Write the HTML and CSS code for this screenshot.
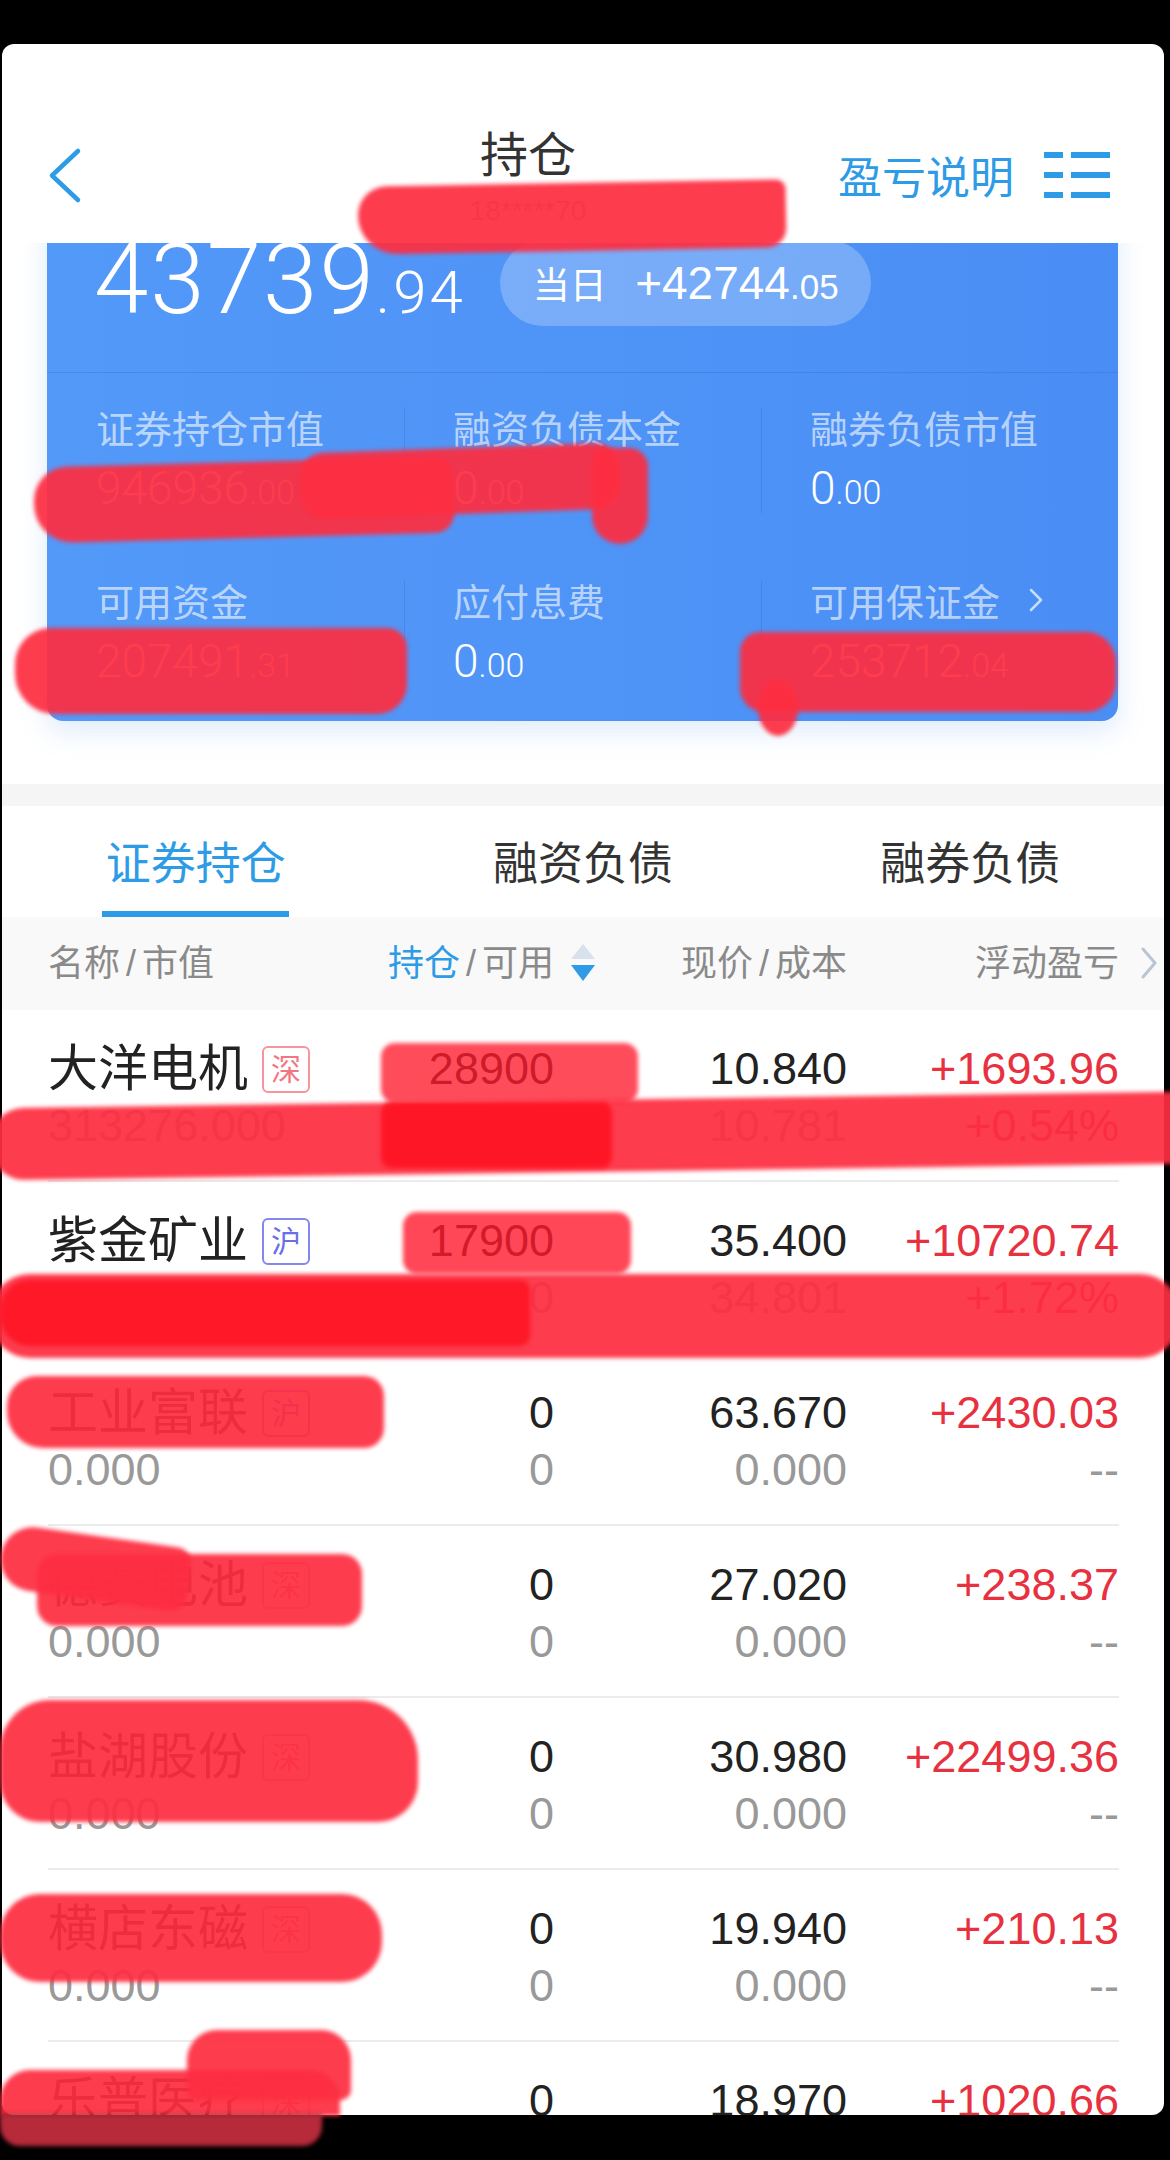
FILE: index.html
```html
<!DOCTYPE html>
<html lang="zh-CN">
<head>
    <meta charset="UTF-8">
    <meta name="viewport" content="width=device-width, initial-scale=1.0">
    <title>持仓</title>
    <link rel="stylesheet" href="styles.css">
</head>
<body>
    <div id="phone">
        <header id="nav">
            <div class="nav-left">
                <svg class="back" width="40" height="60" viewBox="0 0 40 60">
                    <polyline points="30,6 4,30.5 30,55" fill="none" stroke="#2e9be6" stroke-width="4.5" stroke-linecap="round" stroke-linejoin="round"/>
                </svg>
            </div>
            <div class="nav-title">
                <h1>持仓</h1>
                <p>18*****70</p>
            </div>
            <div class="nav-right">
                <span>盈亏说明</span>
                <svg class="menu" width="66" height="46" viewBox="0 0 66 46">
                    <rect x="0" y="0" width="19" height="6" fill="#2e9be6"/>
                    <rect x="27" y="0" width="39" height="6" fill="#2e9be6"/>
                    <rect x="0" y="20" width="19" height="6" fill="#2e9be6"/>
                    <rect x="27" y="20" width="39" height="6" fill="#2e9be6"/>
                    <rect x="0" y="40" width="19" height="6" fill="#2e9be6"/>
                    <rect x="27" y="40" width="39" height="6" fill="#2e9be6"/>
                </svg>
            </div>
        </header>

        <div id="scroll">
            <section id="summary">
                <div class="summary-top">
                    <p class="total">43739<small>.94</small></p>
                    <div class="today">
                        <span class="today-label">当日</span>
                        <span class="today-value">+42744<small>.05</small></span>
                    </div>
                </div>
                <div class="summary-grid">
                    <div class="cell">
                        <p class="label">证券持仓市值</p>
                        <p class="value">946936<small>.00</small></p>
                    </div>
                    <div class="cell">
                        <p class="label">融资负债本金</p>
                        <p class="value">0<small>.00</small></p>
                    </div>
                    <div class="cell">
                        <p class="label">融券负债市值</p>
                        <p class="value">0<small>.00</small></p>
                    </div>
                    <div class="cell">
                        <p class="label">可用资金</p>
                        <p class="value">207491<small>.31</small></p>
                    </div>
                    <div class="cell">
                        <p class="label">应付息费</p>
                        <p class="value">0<small>.00</small></p>
                    </div>
                    <div class="cell">
                        <p class="label">可用保证金
                            <svg class="more" width="16" height="26" viewBox="0 0 16 26">
                                <polyline points="3,3 13,13 3,23" fill="none" stroke="rgba(255,255,255,0.7)" stroke-width="2.5" stroke-linecap="round" stroke-linejoin="round"/>
                            </svg>
                        </p>
                        <p class="value">253712<small>.04</small></p>
                    </div>
                </div>
            </section>

            <div class="band"></div>

            <nav id="tabs">
                <div class="tab active">证券持仓</div>
                <div class="tab">融资负债</div>
                <div class="tab">融券负债</div>
            </nav>

            <div class="thead">
                <div>名称<span class="slash">/</span>市值</div>
                <div class="num"><span class="blue">持仓</span><span class="slash">/</span>可用<svg class="sort" width="24" height="38" viewBox="0 0 24 38">
                        <polygon points="12,0 24,15 0,15" fill="#d8e2ec"/>
                        <polygon points="0,21 24,21 12,37" fill="#2e9be6"/>
                    </svg></div>
                <div class="num">现价<span class="slash">/</span>成本</div>
                <div class="num">浮动盈亏<svg class="next" width="22" height="34" viewBox="0 0 22 34">
                        <polyline points="5,3 17,17 5,31" fill="none" stroke="#b9c5d3" stroke-width="3" stroke-linecap="round" stroke-linejoin="round"/>
                    </svg></div>
            </div>

            <div class="rows">
                <div class="row">
                    <div class="name">大洋电机<span class="badge sz">深</span></div>
                    <div class="num">28900</div>
                    <div class="num">10.840</div>
                    <div class="num up">+1693.96</div>
                    <div class="sub">313276.000</div>
                    <div class="num sub">28900</div>
                    <div class="num sub">10.781</div>
                    <div class="num sub up">+0.54%</div>
                </div>
                <div class="row">
                    <div class="name">紫金矿业<span class="badge sh">沪</span></div>
                    <div class="num">17900</div>
                    <div class="num">35.400</div>
                    <div class="num up">+10720.74</div>
                    <div class="sub">633660.000</div>
                    <div class="num sub">17900</div>
                    <div class="num sub">34.801</div>
                    <div class="num sub up">+1.72%</div>
                </div>
                <div class="row">
                    <div class="name">工业富联<span class="badge sh">沪</span></div>
                    <div class="num">0</div>
                    <div class="num">63.670</div>
                    <div class="num up">+2430.03</div>
                    <div class="sub">0.000</div>
                    <div class="num sub">0</div>
                    <div class="num sub">0.000</div>
                    <div class="num sub">--</div>
                </div>
                <div class="row">
                    <div class="name">德赛电池<span class="badge sz">深</span></div>
                    <div class="num">0</div>
                    <div class="num">27.020</div>
                    <div class="num up">+238.37</div>
                    <div class="sub">0.000</div>
                    <div class="num sub">0</div>
                    <div class="num sub">0.000</div>
                    <div class="num sub">--</div>
                </div>
                <div class="row">
                    <div class="name">盐湖股份<span class="badge sz">深</span></div>
                    <div class="num">0</div>
                    <div class="num">30.980</div>
                    <div class="num up">+22499.36</div>
                    <div class="sub">0.000</div>
                    <div class="num sub">0</div>
                    <div class="num sub">0.000</div>
                    <div class="num sub">--</div>
                </div>
                <div class="row">
                    <div class="name">横店东磁<span class="badge sz">深</span></div>
                    <div class="num">0</div>
                    <div class="num">19.940</div>
                    <div class="num up">+210.13</div>
                    <div class="sub">0.000</div>
                    <div class="num sub">0</div>
                    <div class="num sub">0.000</div>
                    <div class="num sub">--</div>
                </div>
                <div class="row">
                    <div class="name">乐普医疗<span class="badge sz">深</span></div>
                    <div class="num">0</div>
                    <div class="num">18.970</div>
                    <div class="num up">+1020.66</div>
                    <div class="sub">0.000</div>
                    <div class="num sub">0</div>
                    <div class="num sub">0.000</div>
                    <div class="num sub">--</div>
                </div>
            </div>
        </div>
    </div>

    <!-- red marker strokes drawn over the screenshot -->
    <div id="marks">
        <div class="mark m1"></div>
        <div class="mark m2a"></div>
        <div class="mark m2b"></div>
        <div class="mark m2c"></div>
        <div class="mark m3"></div>
        <div class="mark m4a"></div>
        <div class="mark m4b"></div>
        <div class="mark m5a"></div>
        <div class="mark m5b"></div>
        <div class="mark m5c"></div>
        <div class="mark m6a"></div>
        <div class="mark m6b"></div>
        <div class="mark m6c"></div>
        <div class="mark m7"></div>
        <div class="mark m8a"></div>
        <div class="mark m8b"></div>
        <div class="mark m9"></div>
        <div class="mark m10"></div>
        <div class="mark m11a"></div>
        <div class="mark m11b"></div>
        <div class="mark m11c"></div>
    </div>
</body>
</html>
```

FILE: styles.css
```css
:root{
    --blue: #2e9be6;
    --red: #e8313f;
    --grey: #999999;
    --line: #ececec;
}

*{
    box-sizing: border-box;
    margin: 0;
    padding: 0;
}

body{
    position: relative;
    width: 1170px;
    height: 2160px;
    background-color: #000;
    font-family: 'Liberation Sans', 'Noto Sans CJK SC', sans-serif;
    color: #333;
    overflow: hidden;
}

small{
    line-height: 0;
}

#phone{
    margin: 44px 6px 0 2px;
    height: 2071px;
    background-color: #fff;
    border-radius: 12px;
    overflow: hidden;
}

/* nav bar */

#nav{
    height: 199px;
    display: flex;
    align-items: center;
    padding: 62px 54px 0 46px;
}

.nav-left{
    width: 170px;
    display: flex;
    align-items: center;
}

.nav-title{
    flex: 1;
    text-align: center;
}

.nav-title h1{
    font-family: 'Noto Sans CJK SC', sans-serif;
    font-size: 48px;
    line-height: 48px;
    font-weight: 400;
    color: #333;
}

.nav-title p{
    margin-top: 24px;
    font-size: 28px;
    line-height: 24px;
    color: #b0b0b0;
}

.nav-right{
    display: flex;
    align-items: center;
    gap: 30px;
    font-size: 44px;
    color: var(--blue);
}

.nav-right span{
    font-family: 'Noto Sans CJK SC', sans-serif;
    line-height: 50px;
}

#scroll{
    overflow: hidden;
}

/* blue summary card */

#summary{
    margin: -36px 46px 0 45px;
    background: linear-gradient(90deg, #5399f8, #4a8ef5);
    border-radius: 0 0 16px 16px;
    box-shadow: 0 10px 28px rgba(74, 143, 245, 0.18);
    color: #fff;
}

.summary-top{
    display: flex;
    align-items: center;
    height: 166px;
    padding: 33px 0 46px 47px;
    border-bottom: 1px solid rgba(30, 80, 180, 0.2);
}

.total{
    font-family: Roboto, sans-serif;
    font-weight: 300;
    font-size: 98px;
    line-height: 86px;
    letter-spacing: 2px;
    margin-top: -6px;
    white-space: nowrap;
}

.total small{
    font-size: 60px;
    letter-spacing: 3px;
}

.today{
    margin-left: 34px;
    height: 86px;
    line-height: 86px;
    padding: 0 32px 0 33px;
    border-radius: 43px;
    background-color: rgba(255, 255, 255, 0.24);
    white-space: nowrap;
}

.today-label{
    font-family: 'Noto Sans CJK SC', sans-serif;
    font-size: 37px;
    margin-right: 24px;
}

.today-value{
    font-size: 46px;
}

.today-value small{
    font-size: 35px;
}

.summary-grid{
    display: grid;
    grid-template-columns: 1fr 1fr 1fr;
    row-gap: 67px;
    padding: 34px 0 35px;
}

.cell{
    height: 106px;
    padding-left: 48px;
    border-left: 1px solid rgba(30, 80, 180, 0.18);
}

.cell:nth-child(3n+1){
    padding-left: 49px;
    border-left: none;
}

.label{
    height: 40px;
    font-family: 'Noto Sans CJK SC', sans-serif;
    font-size: 38px;
    line-height: 40px;
    color: rgba(255, 255, 255, 0.62);
    display: flex;
    align-items: center;
    white-space: nowrap;
}

.label .more{
    margin-left: 28px;
}

.value{
    margin-top: 16px;
    height: 50px;
    font-family: Roboto, sans-serif;
    font-weight: 300;
    font-size: 46px;
    line-height: 50px;
}

.value small{
    font-size: 34px;
}

.band{
    margin-top: 63px;
    height: 22px;
    background-color: #f5f5f5;
}

/* tabs */

#tabs{
    display: grid;
    grid-template-columns: 1fr 1fr 1fr;
}

.tab{
    height: 111px;
    padding-top: 30px;
    text-align: center;
    font-family: 'Noto Sans CJK SC', sans-serif;
    font-size: 45px;
    line-height: 50px;
    color: #333;
}

.tab.active{
    color: var(--blue);
}

.tab.active::after{
    content: "";
    display: block;
    width: 187px;
    height: 6px;
    margin: 25px auto 0;
    background-color: var(--blue);
}

/* table */

.thead, .row{
    display: grid;
    grid-template-columns: 322px 184px 293px 272px;
}

.thead{
    height: 93px;
    padding: 0 45px 0 46px;
    align-items: center;
    background-color: #f9f9f9;
    font-size: 36px;
    line-height: 44px;
    color: #8a8a8a;
    white-space: nowrap;
}

.slash{
    margin: 0 6px;
}

.num{
    text-align: right;
}

.blue{
    color: var(--blue);
}

.thead svg{
    vertical-align: middle;
}

.sort{
    margin: -6px -41px 0 17px;
}

.next{
    margin: -6px -41px 0 19px;
}

.row{
    height: 172px;
    margin: 0 45px 0 46px;
    padding: 36px 0 31px;
    row-gap: 11px;
    grid-template-rows: 46px 46px;
    border-bottom: 2px solid var(--line);
    font-size: 45px;
    line-height: 46px;
    color: #222;
}

.name{
    height: 46px;
    display: flex;
    align-items: center;
    font-size: 50px;
    white-space: nowrap;
}

.badge{
    width: 48px;
    height: 47px;
    flex-shrink: 0;
    margin-left: 14px;
    border: 2px solid;
    border-radius: 6px;
    font-size: 30px;
    line-height: 43px;
    text-align: center;
}

.badge.sz{
    color: #f27682;
    border-color: #f5959d;
}

.badge.sh{
    color: #6a6ee8;
    border-color: #8487ee;
}

.up{
    color: var(--red);
}

.sub{
    color: var(--grey);
}

.sub.up{
    color: var(--red);
}

/* marker strokes */

#marks{
    position: absolute;
    top: 0;
    left: 0;
    width: 1170px;
    height: 2160px;
    pointer-events: none;
}

.mark{
    position: absolute;
    background-color: rgba(253, 45, 65, 0.93);
    filter: blur(2px);
    border-radius: 30px;
}

.m1{ left: 358px; top: 183px; width: 428px; height: 68px; border-radius: 30px 10px 20px 40px; transform: rotate(-1deg); }
.m2a{ left: 34px; top: 462px; width: 420px; height: 76px; border-radius: 34px 20px 20px 38px; transform: rotate(-1.5deg); }
.m2b{ left: 300px; top: 448px; width: 320px; height: 66px; transform: rotate(-2deg); border-radius: 24px; }
.m2c{ left: 592px; top: 448px; width: 56px; height: 96px; border-radius: 16px 20px 30px 30px; }
.m3{ left: 15px; top: 628px; width: 392px; height: 86px; border-radius: 36px 20px 30px 40px; }
.m4a{ left: 740px; top: 632px; width: 376px; height: 80px; border-radius: 20px 30px 30px 24px; }
.m4b{ left: 758px; top: 680px; width: 40px; height: 56px; border-radius: 50%; }
.m5a{ left: 381px; top: 1043px; width: 257px; height: 60px; border-radius: 14px; background-color: rgba(255, 25, 45, 0.78); }
.m5b{ left: -10px; top: 1100px; width: 1190px; height: 72px; border-radius: 34px 0 0 34px; transform: rotate(-0.8deg); }
.m5c{ left: 381px; top: 1102px; width: 231px; height: 66px; border-radius: 10px; background-color: #ff1626; }
.m6a{ left: 403px; top: 1212px; width: 228px; height: 62px; border-radius: 14px; background-color: rgba(255, 25, 45, 0.8); }
.m6b{ left: -10px; top: 1274px; width: 1190px; height: 84px; border-radius: 40px; }
.m6c{ left: 0; top: 1280px; width: 530px; height: 66px; border-radius: 30px 10px 10px 30px; background-color: #ff1828; }
.m7{ left: 7px; top: 1376px; width: 377px; height: 72px; border-radius: 30px 20px 20px 36px; }
.m8a{ left: 37px; top: 1554px; width: 325px; height: 72px; border-radius: 20px; }
.m8b{ left: 0; top: 1536px; width: 190px; height: 64px; border-radius: 40px 20px 20px 40px; transform: rotate(8deg); }
.m9{ left: 0; top: 1700px; width: 418px; height: 122px; border-radius: 50px 60px 40px 40px; }
.m10{ left: 0; top: 1894px; width: 382px; height: 88px; border-radius: 40px; }
.m11a{ left: 0; top: 2070px; width: 340px; height: 46px; border-radius: 30px 30px 0 0; }
.m11b{ left: 187px; top: 2030px; width: 164px; height: 70px; border-radius: 30px 30px 10px 10px; }
.m11c{ left: 0; top: 2114px; width: 322px; height: 32px; border-radius: 0 0 20px 20px; background-color: #b62a3a; }
```
